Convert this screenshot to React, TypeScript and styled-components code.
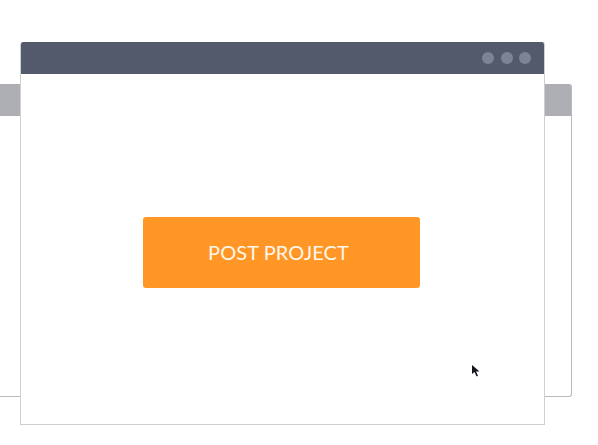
import styled, { createGlobalStyle } from 'styled-components';

const GlobalStyle = createGlobalStyle`
  html, body {
    margin: 0;
    padding: 0;
    background: #ffffff;
  }
  body {
    font-family: Lato, "Open Sans", sans-serif;
  }
`;

const Desktop = styled.div`
  position: relative;
  width: 598px;
  height: 445px;
  overflow: hidden;
  background: #ffffff;
`;

const BackWindow = styled.div`
  position: absolute;
  left: -40px;
  top: 84px;
  width: 610px;
  height: 312px;
  border: 1px solid #b9b9bd;
  border-top: none;
  border-radius: 3px;
  background: #ffffff;
  overflow: hidden;
`;

const BackHeader = styled.div`
  height: 32px;
  background: #aeafb4;
`;

const FrontWindow = styled.div`
  position: absolute;
  left: 20px;
  top: 42px;
  width: 523px;
  height: 382px;
  display: flex;
  flex-direction: column;
  border: 1px solid #cfcfd2;
  border-top: none;
  border-radius: 3px 3px 0 0;
  background: #ffffff;
  overflow: hidden;
`;

const TitleBar = styled.div`
  height: 32px;
  flex: none;
  display: flex;
  align-items: center;
  justify-content: flex-end;
  gap: 6.5px;
  padding-right: 13px;
  background: #525a6b;
`;

const Dot = styled.span`
  width: 12px;
  height: 12px;
  border-radius: 50%;
  background: #7e8494;
`;

const Body = styled.div`
  flex: 1;
  display: flex;
  align-items: center;
  justify-content: center;
  padding-top: 6px;
  padding-right: 2px;
`;

const PostButton = styled.button`
  width: 277px;
  height: 71px;
  padding: 0 6px 0 0;
  border: none;
  border-radius: 3px;
  background: #ff9626;
  color: #fff7ec;
  font-family: Lato, "Open Sans", sans-serif;
  font-size: 20px;
  font-weight: 400;
  letter-spacing: 0.1px;
  cursor: pointer;
`;

const Cursor = styled.svg`
  position: absolute;
  left: 471px;
  top: 364px;
`;

export default function App() {
  return (
    <>
      <GlobalStyle />
      <Desktop>
        <BackWindow>
          <BackHeader />
        </BackWindow>
        <FrontWindow>
          <TitleBar>
            <Dot />
            <Dot />
            <Dot />
          </TitleBar>
          <Body>
            <PostButton>POST PROJECT</PostButton>
          </Body>
        </FrontWindow>
        <Cursor width="10" height="14" viewBox="0 0 10 14">
          <path d="M1 1 L1 10 L3.5 8 L5.5 12.5 L7 11.8 L5 7.5 L8.5 7.5 Z" fill="#1a1420" />
        </Cursor>
      </Desktop>
    </>
  );
}
